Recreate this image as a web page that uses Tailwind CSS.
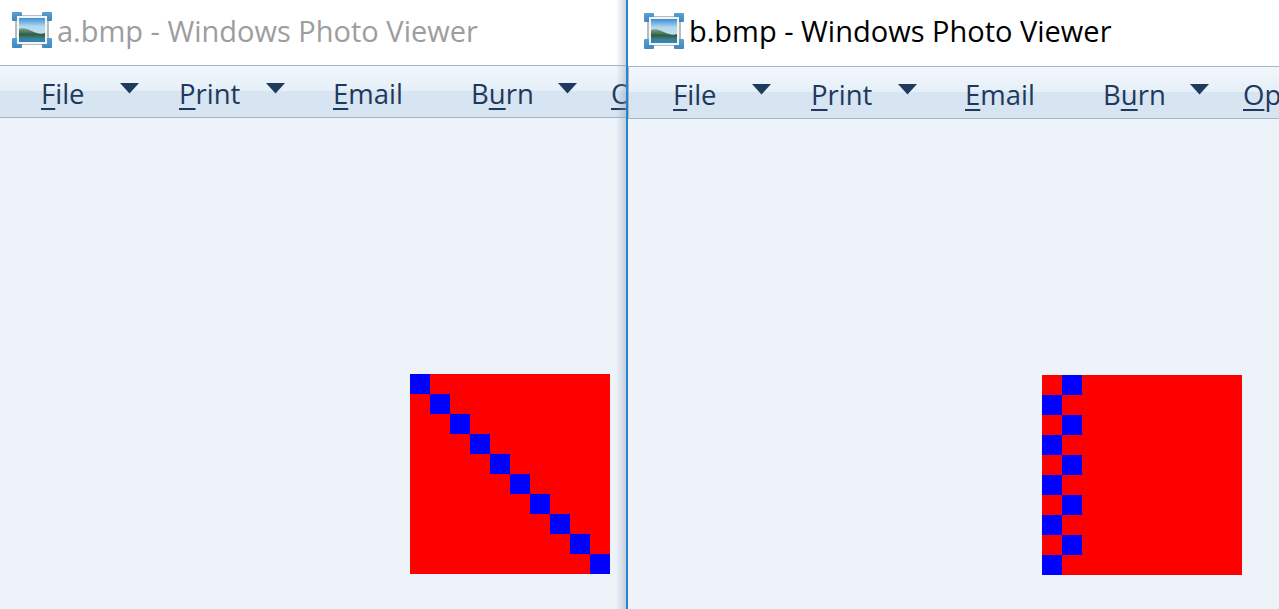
<!DOCTYPE html>
<html lang="en">
<head>
  <meta charset="UTF-8">
  <meta name="viewport" content="width=device-width, initial-scale=1.0">
  <title>Windows Photo Viewer</title>
  <script src="https://cdn.jsdelivr.net/npm/@tailwindcss/browser@4"></script>
</head>
<body class="w-[1279px] h-[609px] overflow-hidden bg-[#eef3fa] font-['Open_Sans','Noto_Sans',sans-serif]">

  <!-- shared symbols -->
  <svg width="0" height="0" class="absolute">
    <defs>
      <linearGradient id="sky" x1="0" y1="0" x2="0" y2="1">
        <stop offset="0" stop-color="#3b8ed8"/>
        <stop offset="0.35" stop-color="#b4d8ec"/>
        <stop offset="1" stop-color="#d5e6ee"/>
      </linearGradient>
      <linearGradient id="hill" x1="0" y1="0" x2="0" y2="1">
        <stop offset="0" stop-color="#7f9d8c"/>
        <stop offset="0.45" stop-color="#2f5f42"/>
        <stop offset="0.75" stop-color="#3f7f96"/>
        <stop offset="1" stop-color="#2b86c8"/>
      </linearGradient>
      <linearGradient id="corner" x1="0" y1="0" x2="0" y2="1">
        <stop offset="0" stop-color="#5a9fd0"/>
        <stop offset="1" stop-color="#3f87bd"/>
      </linearGradient>
      <symbol id="photo" viewBox="0 0 40 36">
        <rect x="3" y="3" width="34" height="30" fill="#b9bbbd"/>
        <rect x="0" y="0" width="10" height="9" rx="1" fill="url(#corner)"/>
        <rect x="30" y="0" width="10" height="9" rx="1" fill="url(#corner)"/>
        <rect x="0" y="26" width="10" height="10" rx="1" fill="url(#corner)"/>
        <rect x="30" y="26" width="10" height="10" rx="1" fill="url(#corner)"/>
        <rect x="5" y="4" width="30" height="28" fill="#f2f4f6"/>
        <rect x="7" y="6" width="26" height="24" fill="url(#sky)"/>
        <path d="M7 17C12 15 17 18 22 20S29 22 33 21V30H7Z" fill="url(#hill)"/>
      </symbol>
      <symbol id="caret" viewBox="0 0 19 11">
        <path d="M0 0H19L9.5 10.5Z" fill="#1f3a5f"/>
      </symbol>
      <symbol id="diagonal" viewBox="0 0 10 10" shape-rendering="crispEdges">
        <rect width="10" height="10" fill="#f00"/>
        <path d="M0 0h1v1H0zM1 1h1v1H1zM2 2h1v1H2zM3 3h1v1H3zM4 4h1v1H4zM5 5h1v1H5zM6 6h1v1H6zM7 7h1v1H7zM8 8h1v1H8zM9 9h1v1H9z" fill="#00f"/>
      </symbol>
      <symbol id="column" viewBox="0 0 10 10" shape-rendering="crispEdges">
        <rect width="10" height="10" fill="#f00"/>
        <path d="M1 0h1v1H1zM0 1h1v1H0zM1 2h1v1H1zM0 3h1v1H0zM1 4h1v1H1zM0 5h1v1H0zM1 6h1v1H1zM0 7h1v1H0zM1 8h1v1H1zM0 9h1v1H0z" fill="#00f"/>
      </symbol>
    </defs>
  </svg>

  <div class="flex h-full">

    <!-- Window a -->
    <section class="relative w-[626px] h-full shrink-0 overflow-hidden flex flex-col">
      <header class="h-[65px] shrink-0 bg-white flex items-center pl-[12px] pb-[5px] gap-[5px]">
        <svg class="w-[40px] h-[36px] shrink-0"><use href="#photo"/></svg>
        <h1 class="text-[29px] leading-none text-[#9d9d9d] whitespace-nowrap">a.bmp - Windows Photo Viewer</h1>
      </header>
      <nav class="h-[53px] shrink-0 border-y border-[#a3b6cc] bg-[linear-gradient(#f2f7fc,#e6eff8_48%,#d7e4f2_50%,#d7e4f2)] flex items-center pl-[41px] pt-[4px] text-[27.5px] leading-none text-[#1e395b] whitespace-nowrap">
        <div class="w-[138px] shrink-0 flex items-center"><span class="w-[79px]"><u class="underline-offset-[4px] decoration-2">F</u>ile</span><svg class="w-[19px] h-[11px] mb-[10px]"><use href="#caret"/></svg></div>
        <div class="w-[154px] shrink-0 flex items-center"><span class="w-[87px]"><u class="underline-offset-[4px] decoration-2">P</u>rint</span><svg class="w-[19px] h-[11px] mb-[10px]"><use href="#caret"/></svg></div>
        <div class="w-[138px] shrink-0"><u class="underline-offset-[4px] decoration-2">E</u>mail</div>
        <div class="w-[140px] shrink-0 flex items-center"><span class="w-[87px]">B<u class="underline-offset-[4px] decoration-2">u</u>rn</span><svg class="w-[19px] h-[11px] mb-[10px]"><use href="#caret"/></svg></div>
        <div class="shrink-0"><u class="underline-offset-[4px] decoration-2">O</u></div>
      </nav>
      <main class="flex-1 flex items-start justify-end pt-[256px] pr-[16px]">
        <svg class="w-[200px] h-[200px]"><use href="#diagonal"/></svg>
      </main>
      <!-- shadow cast by the window on top -->
      <div class="absolute top-0 right-0 bottom-0 w-[10px] bg-gradient-to-r from-transparent to-[#8a98ad]/40"></div>
    </section>

    <!-- Window b -->
    <section class="w-[653px] h-full shrink-0 overflow-hidden flex flex-col border-l-2 border-[#2383cc]">
      <header class="h-[66px] shrink-0 bg-white flex items-center pl-[16px] pb-[5px] gap-[5px]">
        <svg class="w-[40px] h-[36px] shrink-0"><use href="#photo"/></svg>
        <h1 class="text-[29px] leading-none text-black whitespace-nowrap">b.bmp - Windows Photo Viewer</h1>
      </header>
      <nav class="h-[53px] shrink-0 border-y border-l border-[#a3b6cc] bg-[linear-gradient(#f2f7fc,#e6eff8_48%,#d7e4f2_50%,#d7e4f2)] flex items-center pl-[44px] pt-[4px] text-[27.5px] leading-none text-[#1e395b] whitespace-nowrap">
        <div class="w-[138px] shrink-0 flex items-center"><span class="w-[79px]"><u class="underline-offset-[4px] decoration-2">F</u>ile</span><svg class="w-[19px] h-[11px] mb-[10px]"><use href="#caret"/></svg></div>
        <div class="w-[154px] shrink-0 flex items-center"><span class="w-[87px]"><u class="underline-offset-[4px] decoration-2">P</u>rint</span><svg class="w-[19px] h-[11px] mb-[10px]"><use href="#caret"/></svg></div>
        <div class="w-[138px] shrink-0"><u class="underline-offset-[4px] decoration-2">E</u>mail</div>
        <div class="w-[140px] shrink-0 flex items-center"><span class="w-[87px]">B<u class="underline-offset-[4px] decoration-2">u</u>rn</span><svg class="w-[19px] h-[11px] mb-[10px]"><use href="#caret"/></svg></div>
        <div class="shrink-0"><u class="underline-offset-[4px] decoration-2">O</u>p</div>
      </nav>
      <main class="flex-1 flex items-start justify-end pt-[256px] pr-[37px]">
        <svg class="w-[200px] h-[200px]"><use href="#column"/></svg>
      </main>
    </section>

  </div>
</body>
</html>
